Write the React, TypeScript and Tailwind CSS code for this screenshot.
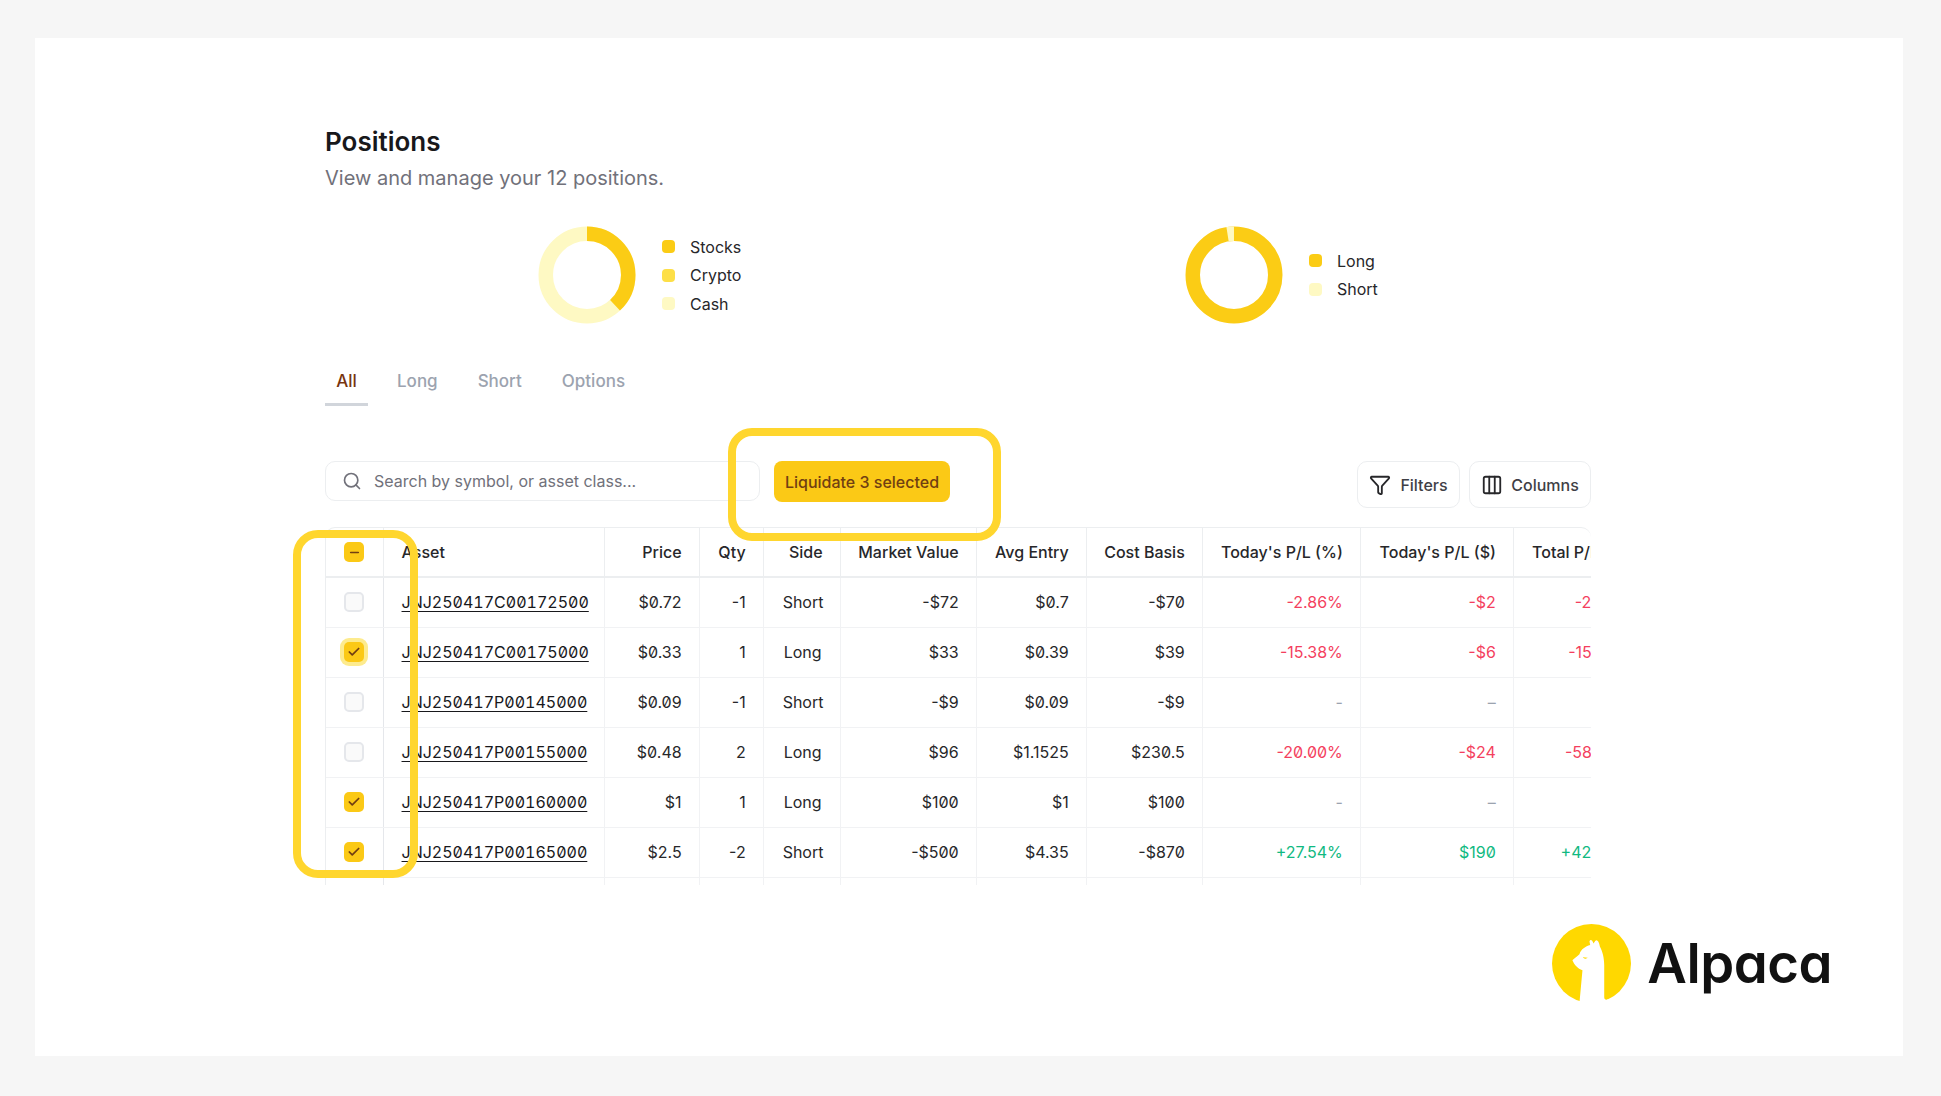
import { Check, Columns3, Funnel, Minus, Search } from "lucide-react";

type Row = {
  asset: string; price: string; qty: string; side: string; mv: string; entry: string; basis: string;
  pct: string; usd: string; total: string; tone: "red" | "green" | "none"; box: "off" | "on" | "focus";
};

const rows: Row[] = [
  { asset: "JNJ250417C00172500", price: "$0.72", qty: "-1", side: "Short", mv: "-$72", entry: "$0.7", basis: "-$70", pct: "-2.86%", usd: "-$2", total: "-2.86%", tone: "red", box: "off" },
  { asset: "JNJ250417C00175000", price: "$0.33", qty: "1", side: "Long", mv: "$33", entry: "$0.39", basis: "$39", pct: "-15.38%", usd: "-$6", total: "-15.38%", tone: "red", box: "focus" },
  { asset: "JNJ250417P00145000", price: "$0.09", qty: "-1", side: "Short", mv: "-$9", entry: "$0.09", basis: "-$9", pct: "-", usd: "–", total: "", tone: "none", box: "off" },
  { asset: "JNJ250417P00155000", price: "$0.48", qty: "2", side: "Long", mv: "$96", entry: "$1.1525", basis: "$230.5", pct: "-20.00%", usd: "-$24", total: "-58.35%", tone: "red", box: "off" },
  { asset: "JNJ250417P00160000", price: "$1", qty: "1", side: "Long", mv: "$100", entry: "$1", basis: "$100", pct: "-", usd: "–", total: "", tone: "none", box: "on" },
  { asset: "JNJ250417P00165000", price: "$2.5", qty: "-2", side: "Short", mv: "-$500", entry: "$4.35", basis: "-$870", pct: "+27.54%", usd: "$190", total: "+42.53%", tone: "green", box: "on" },
];

const headers = ["Asset", "Price", "Qty", "Side", "Market Value", "Avg Entry", "Cost Basis", "Today's P/L (%)", "Today's P/L ($)", "Total P/L (%)"];
const widths = [57, 221, 95, 64, 77, 136, 110, 116, 158, 153, 135];

function Donut({ arcs }: { arcs: { color: string; from: number; to: number }[] }) {
  const r = 41.25;
  const c = 2 * Math.PI * r;
  return (
    <svg width="98" height="98" viewBox="0 0 98 98" className="shrink-0">
      {arcs.map((a, i) => (
        <circle
          key={i}
          cx="49"
          cy="49"
          r={r}
          fill="none"
          stroke={a.color}
          strokeWidth="14.5"
          strokeDasharray={`${((a.to - a.from) / 360) * c} ${c}`}
          transform={`rotate(${a.from - 90} 49 49)`}
        />
      ))}
    </svg>
  );
}

function Legend({ items }: { items: [string, string][] }) {
  return (
    <div className="flex flex-col gap-[6.5px]">
      {items.map(([label, color]) => (
        <div key={label} className="flex h-[22px] items-center gap-[15px] text-[16px] text-[#27272a]">
          <span className="h-[13px] w-[13px] rounded-[4px]" style={{ backgroundColor: color }} />
          {label}
        </div>
      ))}
    </div>
  );
}

function Box({ state }: { state: "off" | "on" | "focus" | "mixed" }) {
  if (state === "off") {
    return <span className="block h-5 w-5 rounded-[5px] border-2 border-[#e5e7eb] bg-[#fafafa]" />;
  }
  return (
    <span
      className={`flex h-5 w-5 items-center justify-center rounded-[5px] bg-[#fbc916] text-[#713f12] ${
        state === "focus" ? "ring-4 ring-[#fdeb8e]" : ""
      }`}
    >
      {state === "mixed" ? <Minus size={13} strokeWidth={3} /> : <Check size={14} strokeWidth={3} />}
    </span>
  );
}

const toneClass = { red: "text-[#f43f5e]", green: "text-[#10b981]", none: "text-[#9ca3af]" };
const th = "h-[49px] border-r border-b-2 border-[#eceef0] px-[17px] text-[16px] font-medium text-[#27272a] whitespace-nowrap";
const td = "h-[50px] border-r border-b px-[17px] text-[16px] whitespace-nowrap slashed-zero";
const cell = `${td} border-[#f1f2f4] text-right text-[#27272a]`;

export default function App() {
  return (
    <div className="h-[1096px] overflow-hidden bg-[#f6f6f6] pt-[38px] pr-[38px] pb-[40px] pl-[35px] font-['Inter','Liberation_Sans',sans-serif]">
      <div className="h-[1018px] bg-white pt-[88px] pl-[290px] pr-[312px]">
        <h1 className="text-[26px] leading-8 font-semibold text-[#18181b]">Positions</h1>
        <p className="mt-[6px] text-[20px] leading-7 text-[#71717a]">View and manage your 12 positions.</p>

        <div className="mt-[34px] flex h-[98px] pl-[213px]">
          <div className="flex w-[647px] items-center gap-[26px]">
            <Donut arcs={[{ color: "#fef9c3", from: 0, to: 360 }, { color: "#fbcc15", from: 0, to: 137 }]} />
            <Legend items={[["Stocks", "#fbcc15"], ["Crypto", "#fddf47"], ["Cash", "#fef9c3"]]} />
          </div>
          <div className="flex items-center gap-[26px]">
            <Donut arcs={[{ color: "#fbcc15", from: 0, to: 360 }, { color: "#fef9c3", from: -9, to: 0 }]} />
            <Legend items={[["Long", "#fbcc15"], ["Short", "#fef9c3"]]} />
          </div>
        </div>

        <div className="mt-9 flex gap-[17px] text-[17px] font-medium text-[#9ca3af]">
          <div className="flex h-[46px] w-[43px] items-center justify-center border-b-[3px] border-[#d1d5db] text-[#78350f]">All</div>
          <div className="flex h-[43px] items-center px-3">Long</div>
          <div className="flex h-[43px] items-center pr-3 pl-[11px]">Short</div>
          <div className="flex h-[43px] items-center pr-3 pl-[11px]">Options</div>
        </div>

        <div className="mt-[55px] flex h-[47px] items-start">
          <div className="flex h-10 w-[435px] items-center gap-[12px] rounded-[10px] border border-[#eceef0] pl-[16px] text-[16px] text-[#71717a]">
            <Search size={20} strokeWidth={2} className="text-[#71717a]" />
            <span>Search by symbol, or asset class...</span>
          </div>
          <div className="relative ml-[14px] flex h-[41px] w-[176px] items-center justify-center rounded-[8px] bg-[#fbc916] text-[16px] font-medium text-[#713f12]">
            Liquidate 3 selected
            <span className="pointer-events-none absolute top-[-33px] left-[-46px] z-10 h-[113px] w-[273px] rounded-[24px] border-[8px] border-[#ffd62e]" />
          </div>
          <div className="ml-auto flex gap-[9px] text-[16px] font-medium text-[#3f3f46]">
            <div className="flex h-[47px] w-[103px] items-center justify-center gap-[9px] rounded-[10px] border border-[#eceef0]">
              <Funnel size={22} strokeWidth={2} className="text-[#27272a]" />
              Filters
            </div>
            <div className="flex h-[47px] w-[122px] items-center justify-center gap-[8px] rounded-[10px] border border-[#eceef0]">
              <Columns3 size={22} strokeWidth={2} className="text-[#27272a]" />
              Columns
            </div>
          </div>
        </div>

        <div className="relative mt-[19px] h-[358px] w-[1266px]">
          <div className="h-full overflow-hidden rounded-tr-[10px] rounded-tl-[10px] border-t border-l border-[#eceef0]">
            <table className="w-[1323px] table-fixed border-collapse">
              <colgroup>
                {widths.map((w, i) => (
                  <col key={i} style={{ width: w }} />
                ))}
              </colgroup>
              <thead>
                <tr>
                  <th className={th}>
                    <div className="flex justify-center">
                      <Box state="mixed" />
                    </div>
                  </th>
                  {headers.map((h, i) => (
                    <th key={h} className={`${th} ${i === 0 ? "pl-[18px] text-left" : "text-right"}`}>
                      {h}
                    </th>
                  ))}
                </tr>
              </thead>
              <tbody>
                {rows.map((r) => (
                  <tr key={r.asset}>
                    <td className={`${td} border-y-[#f1f2f4] border-r-[#e5e7eb]`}>
                      <div className="flex justify-center">
                        <Box state={r.box} />
                      </div>
                    </td>
                    <td className={`${td} border-[#f1f2f4] pl-[18px] text-left text-[#18181b] tabular-nums`}>
                      <span className="underline underline-offset-[3px]">{r.asset}</span>
                    </td>
                    <td className={cell}>{r.price}</td>
                    <td className={cell}>{r.qty}</td>
                    <td className={`${td} border-[#f1f2f4] pl-[19px] text-center text-[#27272a]`}>{r.side}</td>
                    <td className={cell}>{r.mv}</td>
                    <td className={cell}>{r.entry}</td>
                    <td className={cell}>{r.basis}</td>
                    <td className={`${td} border-[#f1f2f4] text-right ${toneClass[r.tone]}`}>{r.pct}</td>
                    <td className={`${td} border-[#f1f2f4] text-right ${toneClass[r.tone]}`}>{r.usd}</td>
                    <td className={`${td} border-[#f1f2f4] text-right ${toneClass[r.tone]}`}>{r.total}</td>
                  </tr>
                ))}
                <tr>
                  {widths.map((_, i) => (
                    <td key={i} className={`${td} border-b-0 ${i === 0 ? "border-r-[#e5e7eb]" : "border-r-[#f1f2f4]"}`} />
                  ))}
                </tr>
              </tbody>
            </table>
          </div>
          <span className="pointer-events-none absolute top-[3px] left-[-32px] z-10 h-[348px] w-[125px] rounded-[25px] border-[8px] border-[#ffd62e]" />
        </div>

        <div className="mt-[39px] mr-[-241px] flex items-center justify-end gap-[16px]">
          <svg width="79" height="79" viewBox="36 27 236 236" className="shrink-0">
            <circle cx="154" cy="145" r="118" fill="#ffd800" />
            <path
              d="M118 262 L127 165 C113 160 102 148 97 135 C103 128 112 124 118 117 C123 102 136 94 150 90 L148 79 C150 72 156 73 160 85 L165 78 C170 72 176 78 179 94 C187 108 192 130 192 150 L192 245 C192 252 196 255 204 252 L204 270 L118 270 Z"
              fill="#ffffff"
            />
            <path d="M128 126 L143 128 C138 132 132 131 128 126 Z" fill="#ffd800" />
          </svg>
          <span className="text-[54.5px] leading-none font-semibold tracking-[-0.5px] text-[#111111] [font-feature-settings:'cv11']">Alpaca</span>
        </div>
      </div>
    </div>
  );
}
